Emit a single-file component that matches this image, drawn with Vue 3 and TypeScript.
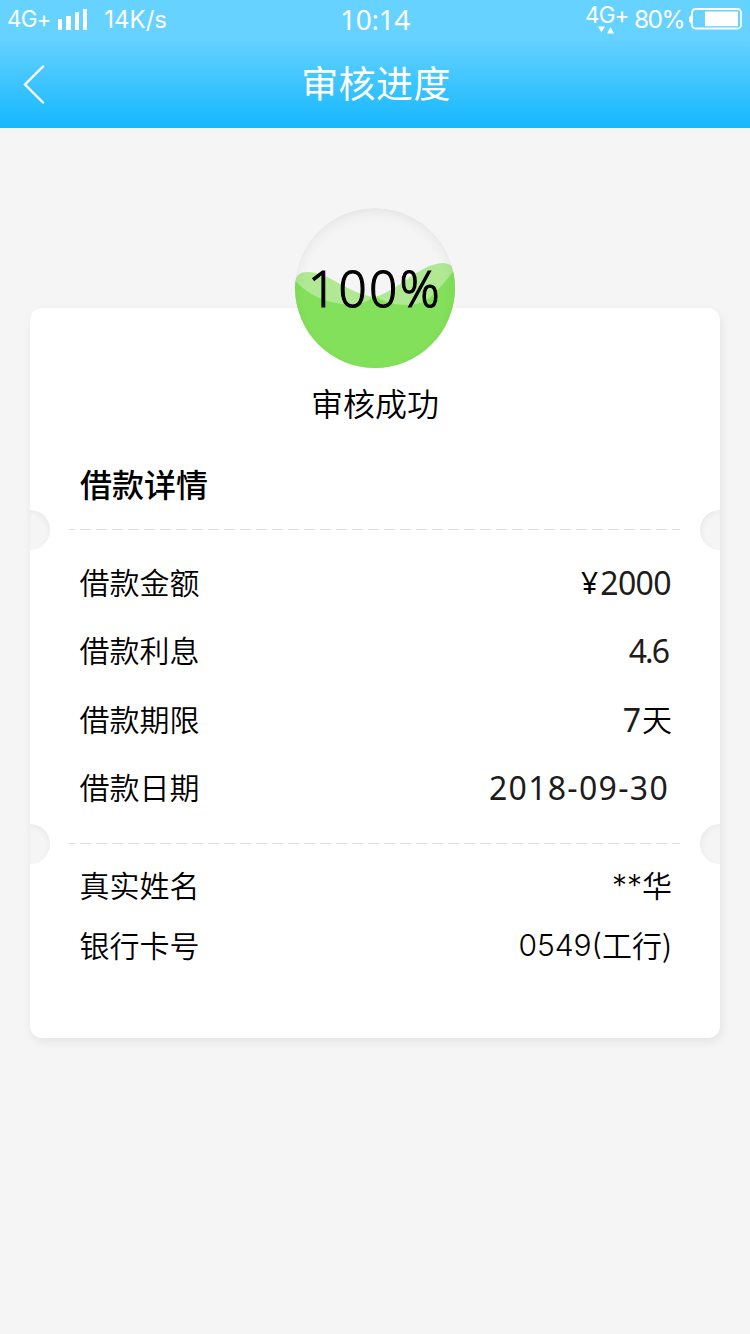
<script setup lang="ts">
interface Row {
  label: string
  symbol?: string
  value: string
  unit?: string
  kind: string
}

const loanRows: Row[] = [
  { label: '借款金额', symbol: '¥', value: '2000', kind: 'amount' },
  { label: '借款利息', value: '4.6', kind: 'interest' },
  { label: '借款期限', value: '7', unit: '天', kind: 'term' },
  { label: '借款日期', value: '2018-09-30', kind: 'date' },
]
const personRows: Row[] = [
  { label: '真实姓名', value: '**', unit: '华', kind: 'name' },
  { label: '银行卡号', value: '0549(', unit: '工行)', kind: 'bank' },
]
const signalBars = [11, 14, 18, 21]
</script>

<template>
  <div class="page">
    <header class="header">
      <div class="status">
        <div class="status-left">
          <span class="net">4G+</span>
          <span class="signal">
            <i v-for="h in signalBars" :key="h" :style="{ height: h + 'px' }"></i>
          </span>
          <span class="speed">14K/s</span>
        </div>
        <span class="clock">10:14</span>
        <div class="status-right">
          <span class="data">
            <span class="data-label">4G+</span>
            <svg class="arrows" width="17" height="8" viewBox="0 0 17 8">
              <path d="M0 0.5H7L3.5 6.5ZM9 7.5H16L12.5 1Z" fill="#fff" />
            </svg>
          </span>
          <span class="percent">80%</span>
          <svg class="battery" width="55" height="22" viewBox="0 0 55 22">
            <path d="M3 6.5H2Q1.500 8.5 0 9V13.5Q1.5 14 2 16H3Z" fill="#fff" />
            <rect x="3" y="1" width="49" height="19.5" rx="3.5" fill="none" stroke="#fff" stroke-width="1.8" />
            <rect x="16" y="3.5" width="33" height="14.7" fill="#fff" />
          </svg>
        </div>
      </div>
      <div class="nav">
        <svg class="back" width="24" height="40" viewBox="0 0 24 40">
          <path d="M21 2.5L3 20.5L21 38.5" fill="none" stroke="#fff" stroke-width="2.4" stroke-linecap="round" />
        </svg>
        <h1 class="title">审核进度</h1>
      </div>
    </header>

    <main class="card">
      <div class="gauge">
        <svg class="waves" width="160" height="160" viewBox="0 0 160 160">
          <path d="M0 100V73Q2 64 12 64C35 64 52 86 80 89C105 82 125 55 149 55Q158 56 160 64V100Z" fill="#b0e894" />
          <path d="M0 73C14 87 31 96 55 96.5C67 96.5 73 93 80 88C88 93 96 97 112 97C136 97 144 79 160 62V160H0Z" fill="#82e05a" />
        </svg>
        <span class="gauge-text">100%</span>
      </div>
      <p class="result">审核成功</p>
      <h2 class="section-title">借款详情</h2>
      <div class="divider">
        <i class="notch left"></i><i class="dashes"></i><i class="notch right"></i>
      </div>
      <dl class="rows loan">
        <div v-for="row in loanRows" :key="row.label" class="row">
          <dt>{{ row.label }}</dt>
          <dd :class="row.kind"><span v-if="row.symbol" class="symbol">{{ row.symbol }}</span><span class="num">{{ row.value }}</span><span v-if="row.unit" class="unit">{{ row.unit }}</span></dd>
        </div>
      </dl>
      <div class="divider">
        <i class="notch left"></i><i class="dashes"></i><i class="notch right"></i>
      </div>
      <dl class="rows person">
        <div v-for="row in personRows" :key="row.label" class="row">
          <dt>{{ row.label }}</dt>
          <dd :class="row.kind"><span class="num">{{ row.value }}</span><span class="unit">{{ row.unit }}</span></dd>
        </div>
      </dl>
    </main>
  </div>
</template>

<style>
body {
  margin: 0;
  background: #f5f5f5;
}
</style>

<style scoped>
.page {
  width: 750px;
  height: 1334px;
  overflow: hidden;
  background: #f5f5f5;
  color: #000;
  font-family: "Noto Sans", "Noto Sans CJK SC", sans-serif;
}
.header {
  height: 128px;
  background: linear-gradient(#66d2ff 0, #66d2ff 38px, #16b8ff 126px);
  color: #fff;
}
.status {
  display: grid;
  grid-template-columns: 1fr auto 1fr;
  height: 40px;
  font-family: Inter, "Liberation Sans", sans-serif;
  font-weight: 400;
}
.status-left,
.status-right {
  display: flex;
  align-items: flex-start;
}
.net {
  width: 50px;
  padding-left: 7px;
  font-size: 22.5px;
  line-height: 37px;
  letter-spacing: -0.9px;
}
.signal {
  display: flex;
  align-items: flex-end;
  gap: 4.2px;
  height: 30px;
  margin-left: 1px;
}
.signal i {
  width: 4.2px;
  background: #fff;
}
.speed {
  margin-left: 17px;
  font-size: 24px;
  line-height: 39px;
}
.clock {
  font-family: "Noto Sans", sans-serif;
  font-size: 28px;
  line-height: 38px;
  letter-spacing: -0.3px;
}
.status-right {
  justify-content: flex-end;
}
.data {
  display: flex;
  flex-direction: column;
  width: 49px;
}
.data-label {
  height: 26px;
  font-size: 22.5px;
  line-height: 30px;
  letter-spacing: -0.9px;
}
.arrows {
  margin-left: 13px;
}
.percent {
  width: 55px;
  font-size: 24.5px;
  line-height: 39px;
  letter-spacing: -1.6px;
}
.battery {
  margin: 8px 6px 0 0;
}
.nav {
  display: grid;
  grid-template-columns: 1fr auto 1fr;
  height: 88px;
}
.back {
  margin: 24px 0 0 22px;
}
.title {
  margin: 0;
  padding-left: 2px;
  font: 400 37px/84px "Noto Sans CJK SC", sans-serif;
  letter-spacing: 0.4px;
}
.card {
  position: relative;
  width: 690px;
  height: 730px;
  margin: 180px 30px 0;
  border-radius: 12px;
  background: #fff;
  box-shadow: 2px 4px 10px rgba(0, 0, 0, 0.07);
}
.gauge {
  position: absolute;
  top: -100px;
  left: 265px;
  width: 160px;
  height: 160px;
  border-radius: 50%;
  overflow: hidden;
  background: #f5f5f5;
}
.gauge::after {
  content: "";
  position: absolute;
  inset: 0;
  border-radius: 50%;
  box-shadow: inset 0 5px 14px -3px rgba(0, 0, 0, 0.09);
}
.waves {
  display: block;
}
.gauge-text {
  position: absolute;
  z-index: 1;
  top: 45px;
  left: 13px;
  font-size: 49.5px;
  font-weight: 300;
  line-height: 70px;
  letter-spacing: 2.2px;
  white-space: nowrap;
  -webkit-text-stroke: 1.1px #000;
}
.result {
  margin: 0;
  padding-top: 74px;
  text-align: center;
  font: 350 32px/40px "Noto Sans CJK SC", sans-serif;
}
.section-title {
  margin: 0;
  padding: 41px 0 7px 50px;
  font: 500 32px/40px "Noto Sans CJK SC", sans-serif;
}
.divider {
  display: flex;
  align-items: center;
  justify-content: space-between;
  height: 40px;
}
.notch {
  width: 20px;
  height: 40px;
  background: #f5f5f5;
}
.notch.left {
  border-radius: 0 20px 20px 0;
  box-shadow: inset -2px 3px 7px -3px rgba(0, 0, 0, 0.07);
}
.notch.right {
  border-radius: 20px 0 0 20px;
  box-shadow: inset 3px 2px 7px -3px rgba(0, 0, 0, 0.07);
}
.dashes {
  width: 611px;
  height: 1px;
  margin: 0 0 1px -1px;
  background: repeating-linear-gradient(90deg, #ddd 0 11px, transparent 11px 16px) -5px 0 / 640px 1px;
}
.rows {
  margin: 0;
  padding: 0 49px 0 49.5px;
}
.loan {
  height: 274px;
}
.person {
  margin-top: -9px;
}
.row {
  display: flex;
  justify-content: space-between;
  height: 68.3px;
  line-height: 67px;
}
.person .row {
  height: 60px;
  line-height: 60px;
}
dt,
.unit {
  font-family: "Noto Sans CJK SC", sans-serif;
  font-size: 30px;
  font-weight: 350;
  margin-top: -2px;
}
.person dt,
.person .unit {
  margin-top: -1px;
}
dd {
  display: flex;
  margin: 0;
  font-size: 32px;
}
.loan .num {
  margin-top: -1px;
  color: #1c1c1c;
}
.symbol {
  margin-right: 2px;
  font-family: "Noto Sans", sans-serif;
  font-size: 30px;
  line-height: 65px;
}
.amount .num {
  letter-spacing: -0.6px;
}
.interest .num {
  margin-right: 3px;
  letter-spacing: -2px;
}
.term .num {
  margin-right: 1px;
}
.term,
.person .row dd {
  margin-right: -1px;
}
.date .num {
  margin-right: 2px;
  letter-spacing: 1.3px;
}
.person .num {
  font-family: Inter, sans-serif;
  font-weight: 300;
  font-size: 30px;
}
</style>
